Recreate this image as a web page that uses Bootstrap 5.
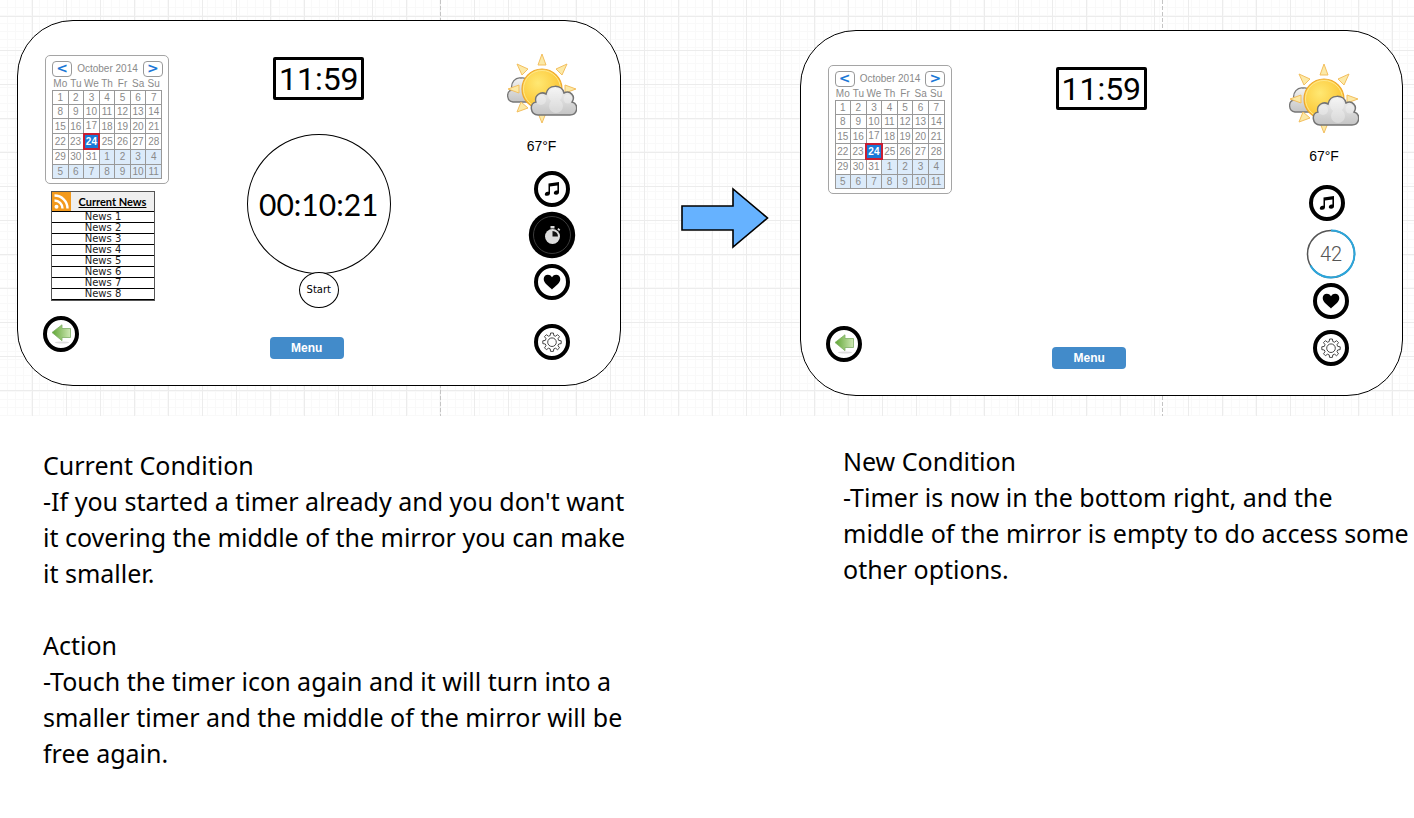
<!DOCTYPE html>
<html lang="en">
<head>
<meta charset="utf-8">
<meta name="viewport" content="width=device-width, initial-scale=1">
<title>Smart mirror – timer conditions</title>
<link href="https://cdn.jsdelivr.net/npm/bootstrap@5.3.0/dist/css/bootstrap.min.css" rel="stylesheet">
<style>
body{background:#fff;color:#000;font-family:"Liberation Sans",Arial,sans-serif}
button{color:inherit;font-family:inherit}
/* drawing canvas with its grid and page guides */
.stage{padding:0 11px 20px 17px;background:
 linear-gradient(#c4c4c4 60%,transparent 60%) 31.15% 0/1px 6px repeat-y,
 linear-gradient(#c4c4c4 60%,transparent 60%) 82.25% 0/1px 6px repeat-y,
 linear-gradient(90deg,#ececec 1px,transparent 1px) 32px 0/34px 34px,
 linear-gradient(#ececec 1px,transparent 1px) 0 16px/34px 34px,
 repeating-linear-gradient(90deg,transparent 0 7px,#f9f9f9 7px 8px),
 repeating-linear-gradient(transparent 0 7px,#f9f9f9 7px 8px),#fff}
.mirror{flex:1 1 0;min-height:366px;margin-top:20px;border:1px solid #000;border-radius:56px;background:#fff;display:grid;grid-template-columns:1fr auto 1fr;padding:0 25px}
.mirror-after{margin-top:30px}
.arrow-gap{flex:0 0 179px;padding:187px 0 0 30px}
.side-left{padding:34px 0 33px}
.middle{padding:36px 0 26px}
.side-right{padding:32px 18px 25px 0}
.calendar{width:124px;height:129px;margin-left:2px;border:1px solid #a5a5a5;border-radius:5px;color:#8a8a8a;font-size:10px;line-height:12px;padding:5px 5px 4px 6px}
.cal-nav{width:20px;height:16px;border:1px solid #999;border-radius:4px;background:#fff;color:#1c78d6;font:bold 14px/12px "DejaVu Sans",sans-serif;padding:0 0 2px}
.cal-grid{width:110px;height:102px;table-layout:fixed;border-collapse:collapse;text-align:center;line-height:11px}
.cal-grid th{font-weight:400;padding:0;height:13px}
.cal-grid td{border:1px solid #999;padding:0}
.cal-grid .next-month{background:#dcebfa}
.cal-grid .today{background:#1878d8;color:#fff;font-weight:700;border:2px solid #c81e32}
.news{width:104px;margin:7px 0 0 8px;border:1px solid #555}
.news-head{height:19px;background:#efefef;font:bold 11px/19px Lato,sans-serif}
.news ul{font:10px/10px "DejaVu Sans",sans-serif;color:#222}
.news li{border-top:1px solid #000;height:11px;text-align:center}
.news li:last-child{border-bottom:1px solid #000;height:12px}
.round{width:36px;height:36px;border:4px solid #000;border-radius:50%;background:#fff;padding:0;display:flex;align-items:center;justify-content:center}
.digital{width:91px;height:43px;border:3px solid #000;border-radius:2px;font:32px/38px Roboto,sans-serif;text-align:center}
.dial{width:144px;height:140px;border:1px solid #000;border-radius:50%;margin-top:34px;font:30px/138px Lato,sans-serif;text-align:center}
.start{width:40px;height:36px;margin-top:-2px;border:1px solid #000;border-radius:50%;background:#fff;padding:0;font:10px/30px "DejaVu Sans",sans-serif}
.menu-btn{width:74px;height:22px;padding:0;border:0;border-radius:4px;background:#428bca;color:#fff;font-size:12px;line-height:22px;font-weight:700}
.weather{width:70px}
.degrees{font-size:14px;line-height:20px;margin-top:11px}
.tools{width:50px;margin-top:15px}
.mirror-after .tools{width:56px;margin-top:19px}
.timer-on{width:48px;height:48px;border:0;border-radius:50%;background:none;padding:0;margin:4px 0 5px}
.ring{margin:8px 0 4px}
.ring text{font:300 20px Roboto,sans-serif}
.notes{display:grid;grid-template-columns:800fr 571fr;padding:27px 0 44px 43px;font:25px/36px "Noto Sans",sans-serif}
.notes p{white-space:nowrap}
.notes p+p{margin-top:36px}
</style>
</head>
<body>
<svg width="0" height="0" class="position-absolute" aria-hidden="true">
 <defs>
  <radialGradient id="gSun" cx=".4" cy=".35" r=".7"><stop offset="0" stop-color="#ffe873"/><stop offset="1" stop-color="#fbc02a"/></radialGradient>
  <linearGradient id="gCloud" x1="0" y1="0" x2="0" y2="1"><stop offset="0" stop-color="#f3f3f3"/><stop offset="1" stop-color="#c4c4c4"/></linearGradient>
  <linearGradient id="gBack" x1="0" y1="0" x2="1" y2="0"><stop offset="0" stop-color="#5fa534"/><stop offset="1" stop-color="#cfe8b4"/></linearGradient>
  <symbol id="sun" viewBox="0 0 70 72">
   <path d="M6 49C-1 48-1 38 5 37C3 29 9 24 14 25C20 24 24 29 23 49Z" fill="url(#gCloud)" stroke="#777" stroke-width="1.3"/>
   <g fill="#fce9a6" stroke="#f3bf5f" stroke-width="1"><path d="M35 1l4 11h-8z"/><path d="M10 11l11 5-6 6z"/><path d="M60 11l-5 11-6-6z"/><path d="M69 36l-11 4v-8z"/><path d="M1 36l11-4v8z"/><path d="M10 59l4-10 7 6z"/><path d="M35 70l-4-10h8z"/></g>
   <circle cx="35" cy="36" r="20" fill="url(#gSun)" stroke="#efa72c" stroke-width="1.2"/>
   <circle cx="35" cy="36" r="18.5" fill="none" stroke="#ffe78b" stroke-width="1"/>
   <path d="M31 62C23 62 22 50 29 49C27 42 34 38 39 41C41 31 55 31 57 40C63 37 69 43 65 49C72 51 71 62 63 62Z" fill="url(#gCloud)" stroke="#747474" stroke-width="1.5"/>
   <g fill="#fff" opacity=".3"><circle cx="34" cy="47" r="5"/><circle cx="48" cy="42" r="7"/><circle cx="61" cy="46" r="4.500"/><circle cx="49" cy="53" r="7"/></g>
  </symbol>
  <symbol id="back" viewBox="0 0 20 20"><ellipse cx="11" cy="18.500" rx="7" ry="1" fill="#ddd"/><path d="M1 8.500L11 .8V4.500h8.500v9H11v3.200z" fill="url(#gBack)" stroke="#7fae66" stroke-width=".8"/></symbol>
  <symbol id="music" viewBox="0 0 16 16"><path d="M4.500 2.500L15 1v10.300a2.600 2 -15 1 1-1.600-1.700V4.600L6 5.600v7a2.600 2 -15 1 1-1.500-1.800z"/></symbol>
  <symbol id="heart" viewBox="0 0 18 16"><path d="M9 15.500C7 13 .7 9.500.7 4.900C.7.200 6.800-.8 9 3.200C11.200-.8 17.300.200 17.300 4.900C17.300 9.500 11 13 9 15.500z"/></symbol>
  <symbol id="gear" viewBox="0 0 20 20"><g fill="none" stroke="#333" stroke-width=".9" stroke-linejoin="round"><path d="M8.600 1h2.800l.4 2.500 1.700.7 2.100-1.500 1.900 1.900-1.500 2.100.7 1.700 2.500.4v2.800l-2.500.4-.7 1.700 1.500 2.100-1.900 1.900-2.100-1.500-1.700.7-.4 2.500H8.600l-.4-2.500-1.700-.7-2.100 1.500-1.900-1.900L4 13.700 3.300 12 .8 11.600V8.800l2.500-.4L4 6.700 2.500 4.600l1.900-1.900 2.100 1.500 1.700-.7z"/><circle cx="10" cy="10.200" r="4.300"/></g></symbol>
 </defs>
</svg>

<main>
<section class="stage d-flex align-items-start">
 <div class="mirror">
  <div class="side-left d-flex flex-column align-items-start">
   <div class="calendar" data-calendar></div>
   <div class="news">
    <div class="news-head d-flex">
     <svg width="19" height="19" viewBox="0 0 19 19" aria-hidden="true"><rect width="19" height="19" fill="#f39a1d"/><g fill="none" stroke="#fff" stroke-width="2.400"><path d="M2.500 8.500a8 8 0 0 1 8 8M2.500 3.500a13 13 0 0 1 13 13"/></g><circle cx="4.500" cy="14.800" r="2" fill="#fff"/></svg>
     <span class="flex-grow-1 text-center text-decoration-underline">Current News</span>
    </div>
    <ul class="list-unstyled mb-0"><li>News 1</li><li>News 2</li><li>News 3</li><li>News 4</li><li>News 5</li><li>News 6</li><li>News 7</li><li>News 8</li></ul>
   </div>
   <button type="button" class="round mt-auto" aria-label="Back"><svg width="20" height="20"><use href="#back"/></svg></button>
  </div>
  <div class="middle d-flex flex-column align-items-center">
   <div class="digital">11:59</div>
   <div class="dial">00:10:21</div>
   <button type="button" class="start">Start</button>
   <button type="button" class="menu-btn mt-auto me-4">Menu</button>
  </div>
  <div class="side-right d-flex flex-column align-items-end">
   <div class="weather text-center"><svg class="d-block" width="70" height="72" aria-hidden="true"><use href="#sun"/></svg><div class="degrees">67°F</div></div>
   <div class="tools d-flex flex-column align-items-center flex-grow-1">
    <button type="button" class="round" aria-label="Music"><svg width="16" height="16"><use href="#music"/></svg></button>
    <button type="button" class="timer-on" aria-label="Timer"><svg class="d-block" width="48" height="48" viewBox="0 0 48 48"><circle cx="24" cy="24" r="23.200" fill="#000"/><circle cx="24" cy="24" r="18.500" fill="none" stroke="#3c3c3c" stroke-width="1"/><circle cx="24.500" cy="25.500" r="7.500" fill="#ddd"/><path d="M24.500 25.500v-5.500a5.500 5.500 0 0 1 5.500 5.500z" fill="#111"/><path d="M22.500 15h4v2.500h-4zM30.500 17l1.800 1.800-1.200 1.200-1.800-1.800z" fill="#ddd"/></svg></button>
    <button type="button" class="round" aria-label="Favourites"><svg width="18" height="16"><use href="#heart"/></svg></button>
    <button type="button" class="round mt-auto" aria-label="Settings"><svg width="20" height="20"><use href="#gear"/></svg></button>
   </div>
  </div>
 </div>

 <div class="arrow-gap text-center">
  <svg width="88" height="62" viewBox="0 0 88 62" role="img" aria-label="leads to"><path d="M1 19h51V2l34.500 29L52 60V43H1z" fill="#66b2ff" stroke="#000" stroke-width="1.600"/></svg>
 </div>

 <div class="mirror mirror-after">
  <div class="side-left d-flex flex-column align-items-start">
   <div class="calendar" data-calendar></div>
   <button type="button" class="round mt-auto" aria-label="Back"><svg width="20" height="20"><use href="#back"/></svg></button>
  </div>
  <div class="middle d-flex flex-column align-items-center">
   <div class="digital">11:59</div>
   <button type="button" class="menu-btn mt-auto me-4">Menu</button>
  </div>
  <div class="side-right d-flex flex-column align-items-end">
   <div class="weather text-center"><svg class="d-block" width="70" height="72" aria-hidden="true"><use href="#sun"/></svg><div class="degrees">67°F</div></div>
   <div class="tools d-flex flex-column align-items-center flex-grow-1">
    <button type="button" class="round me-2" aria-label="Music"><svg width="16" height="16"><use href="#music"/></svg></button>
    <svg class="ring" width="50" height="50" viewBox="0 0 50 50"><circle cx="25" cy="25" r="23.500" fill="#fff" stroke="#555" stroke-width="1.500"/><path d="M25 1.500A23.500 23.500 0 1 1 4.500 36.500" fill="none" stroke="#2ba6dc" stroke-width="2"/><text x="25" y="32" text-anchor="middle" fill="#555">42</text></svg>
    <button type="button" class="round" aria-label="Favourites"><svg width="18" height="16"><use href="#heart"/></svg></button>
    <button type="button" class="round mt-auto mb-1" aria-label="Settings"><svg width="20" height="20"><use href="#gear"/></svg></button>
   </div>
  </div>
 </div>
</section>

<section class="notes">
 <div class="pt-1">
  <p class="mb-0">Current Condition<br>-If you started a timer already and you don't want<br>it covering the middle of the mirror you can make<br>it smaller.</p>
  <p class="mb-0">Action<br>-Touch the timer icon again and it will turn into a<br>smaller timer and the middle of the mirror will be<br>free again.</p>
 </div>
 <div>
  <p class="mb-0">New Condition<br>-Timer is now in the bottom right, and the<br>middle of the mirror is empty to do access some<br>other options.</p>
 </div>
</section>
</main>

<script>
// Fill both calendars: 31 October days, then the first 11 of November.
const head = '<div class="d-flex justify-content-between align-items-center"><button type="button" class="cal-nav" aria-label="Previous month">&lt;</button><span>October 2014</span><button type="button" class="cal-nav" aria-label="Next month">&gt;</button></div>';
const days = ['Mo','Tu','We','Th','Fr','Sa','Su'].map(d => `<th>${d}</th>`).join('');
let rows = '';
for (let r = 0; r < 6; r++) {
  rows += '<tr>';
  for (let c = 1; c <= 7; c++) {
    const n = r * 7 + c;
    rows += `<td class="${n > 31 ? 'next-month' : n === 24 ? 'today' : ''}">${n > 31 ? n - 31 : n}</td>`;
  }
  rows += '</tr>';
}
document.querySelectorAll('[data-calendar]').forEach(el => {
  el.innerHTML = `${head}<table class="cal-grid"><thead><tr>${days}</tr></thead><tbody>${rows}</tbody></table>`;
});
</script>
<script src="https://cdn.jsdelivr.net/npm/bootstrap@5.3.0/dist/js/bootstrap.bundle.min.js"></script>
</body>
</html>
